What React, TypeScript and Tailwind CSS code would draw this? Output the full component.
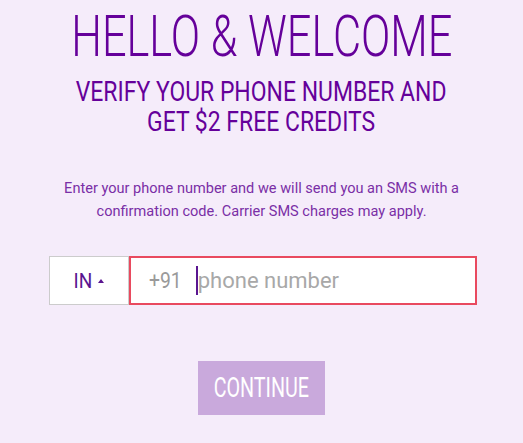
export default function App() {
  return (
    <div className="min-h-[443px] bg-[#f5ecfa] flex flex-col items-center font-['Roboto',sans-serif] overflow-hidden">
      <h1 className="mt-[8px] text-[57px] leading-[57px] font-light text-[#65009a] whitespace-nowrap">
        <span className="inline-block scale-x-[0.76]">HELLO &amp; WELCOME</span>
      </h1>
      <h2 className="mt-[12px] text-[27px] leading-[30px] font-normal text-[#65009a] text-center whitespace-nowrap">
        <span className="inline-block scale-x-[0.85]">
          VERIFY YOUR PHONE NUMBER AND
          <br />
          GET $2 FREE CREDITS
        </span>
      </h2>
      <p className="mt-[40px] text-[15px] leading-[23px] text-[#7a2fa6] text-center whitespace-nowrap">
        <span className="inline-block scale-x-[0.97]">
          Enter your phone number and we will send you an SMS with a
          <br />
          confirmation code. Carrier SMS charges may apply.
        </span>
      </p>
      <div className="mt-[33px] ml-[2px] flex w-[428px] h-[49px]">
        <button className="w-[80px] h-full bg-white border border-[#cccccc] flex items-center justify-center gap-[6px] text-[#5a1590]">
          <span className="text-[20px] leading-none inline-block scale-x-[0.95]">IN</span>
          <span className="w-0 h-0 border-l-[3px] border-r-[3px] border-b-[4px] border-l-transparent border-r-transparent border-b-[#5a1590]" />
        </button>
        <div className="flex-1 h-full bg-white border-2 border-[#e94a5f] flex items-center pl-[18px]">
          <span className="text-[22px] leading-none text-[#9a9a9a] inline-block scale-x-[0.88] origin-left">+91</span>
          <span className="ml-[10px] w-[2px] h-[29px] bg-[#5a1590]" />
          <span className="text-[22px] leading-none text-[#a8a8a8]">phone number</span>
        </div>
      </div>
      <button className="mt-[56px] w-[127px] h-[54px] bg-[#c9a9dc] text-white flex items-center justify-center">
        <span className="text-[27px] leading-none inline-block scale-x-[0.73]">CONTINUE</span>
      </button>
    </div>
  );
}
